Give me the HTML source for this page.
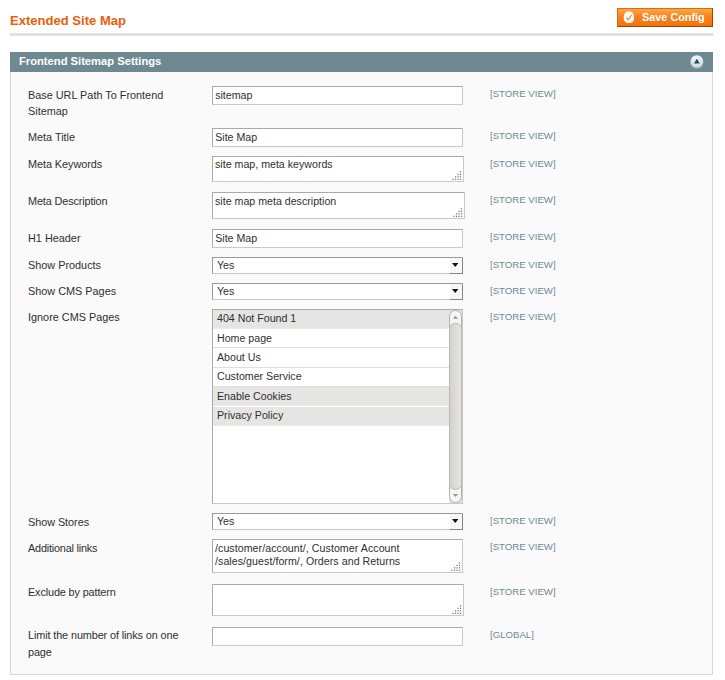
<!DOCTYPE html>
<html>
<head>
<meta charset="utf-8">
<title>Extended Site Map</title>
<style>
*{margin:0;padding:0;box-sizing:border-box;}
html,body{background:#fff;}
body{width:725px;height:680px;overflow:hidden;position:relative;font:10.875px/16px "Liberation Sans",Arial,Helvetica,sans-serif;color:#2f2f2f;}
h3{position:absolute;left:10px;top:12px;font-size:13.05px;line-height:18px;font-weight:bold;color:#e8600a;white-space:nowrap;}
.save{position:absolute;left:617px;top:8px;width:96px;height:19px;border:1px solid #ed6502;border-color:#d66d14 #a04300 #a04300 #d66d14;background:linear-gradient(#ffa940,#f6821f 45%,#f3730d);color:#fff;font-weight:bold;font-size:10.875px;line-height:17px;white-space:nowrap;}
.save span{position:absolute;left:24px;top:0;}
.save svg{position:absolute;left:5px;top:2px;}
.rule{position:absolute;left:10px;top:33px;width:703px;height:3px;background:#e0e0e0;}
.head{position:absolute;left:10px;top:52px;width:703px;height:20px;background:#6f8992;}
.head h4{position:absolute;left:9px;top:0px;font-size:11.2px;line-height:18px;color:#fff;font-weight:bold;white-space:nowrap;}
.head svg{position:absolute;left:678px;top:0;}
.fs{position:absolute;left:10px;top:72px;width:703px;height:603px;border:1px solid #d6d6d6;border-top:0;background:#fafafa;}
.lbl{position:absolute;left:28px;width:175px;}
.in{position:absolute;left:212px;width:251px;background:#fff;border:1px solid #aaa;border-color:#aaa #c8c8c8 #c8c8c8 #aaa;overflow:hidden;}
.in span{position:absolute;left:2.2px;top:0;white-space:pre;line-height:13px;font-size:10.65px;}
.in.t span{left:2px;top:2px;}
.sel span{left:4px;}
.sc{position:absolute;left:490px;font-size:9.65px;line-height:14px;margin-top:-0.3px;color:#6f8992;white-space:nowrap;}
.grip{position:absolute;right:0px;bottom:0.2px;}
.arrow{position:absolute;right:-1px;top:0;bottom:-1px;width:13.5px;background:#f7f7f7;border-right:1px solid #858585;border-bottom:1px solid #858585;}
.arrow svg{position:absolute;left:2.4px;top:5px;}
.in.sel{overflow:visible;border-color:#9a9a9a #c8c8c8 #c8c8c8 #9a9a9a;}
.ms{position:absolute;left:212px;top:309px;width:251px;height:195px;background:#fff;border:1px solid #aaa;border-color:#aaa #c8c8c8 #c8c8c8 #aaa;overflow:hidden;}
.ms .o{position:absolute;left:0;width:236px;height:19.36px;padding-left:4px;padding-top:0.7px;line-height:17px;border-bottom:1px solid #dedede;white-space:nowrap;font-size:10.65px;}
.ms .o.s{background:#e6e5e4;border-bottom-color:#eae9e8;}
.sb{position:absolute;left:236px;top:0;}
</style>
</head>
<body>
<h3>Extended Site Map</h3>
<div class="save"><svg width="12" height="13" viewBox="0 0 12 13"><rect x="0.8" y="0.6" width="10.2" height="11.4" rx="4.4" ry="4.6" fill="#fff9f2"/><path d="M3.4 6.7l1.9 2l3.3-4.7" fill="none" stroke="#ea8a3c" stroke-width="1.2"/></svg><span>Save Config</span></div>
<div class="rule"></div>
<div class="head"><h4>Frontend Sitemap Settings</h4><svg width="18" height="18" viewBox="0 0 18 18"><defs><linearGradient id="cg" x1="0" y1="0" x2="0" y2="1"><stop offset="0" stop-color="#f4f7f8"/><stop offset="1" stop-color="#c9d8dc"/></linearGradient></defs><g transform="translate(-0.15 0.55)"><ellipse cx="9" cy="10.2" rx="7" ry="6.6" fill="#8fa5ac" opacity="0.55"/><circle cx="9" cy="9" r="6.3" fill="url(#cg)"/><path d="M6.1 10.9h5.8l-2.9-4.8z" fill="#1f4b5b"/></g></svg></div>
<div class="fs"></div>

<div class="lbl" style="top:87px;letter-spacing:0px;">Base URL Path To Frontend Sitemap</div>
<div class="in" style="top:86px;height:19px"><span style="top:2px">sitemap</span></div>
<div class="sc" style="top:87px">[STORE VIEW]</div>
<div class="lbl" style="top:129px;letter-spacing:0px;">Meta Title</div>
<div class="in" style="top:128px;height:19px"><span style="top:2px">Site Map</span></div>
<div class="sc" style="top:129px">[STORE VIEW]</div>
<div class="lbl" style="top:156px;letter-spacing:-0.06px;">Meta Keywords</div>
<div class="in t" style="top:156px;height:26px;width:252px"><span style="letter-spacing:0px;top:1.2px">site map, meta keywords</span><svg class="grip" width="11.6" height="11.2" viewBox="0 0 9 9"><g fill="#777"><rect x="7" y="1" width="1" height="1"/><rect x="5" y="3" width="1" height="1"/><rect x="7" y="3" width="1" height="1"/><rect x="3" y="5" width="1" height="1"/><rect x="5" y="5" width="1" height="1"/><rect x="7" y="5" width="1" height="1"/><rect x="1" y="7" width="1" height="1"/><rect x="3" y="7" width="1" height="1"/><rect x="5" y="7" width="1" height="1"/><rect x="7" y="7" width="1" height="1"/></g></svg></div>
<div class="sc" style="top:157px">[STORE VIEW]</div>
<div class="lbl" style="top:193px;letter-spacing:-0.13px;">Meta Description</div>
<div class="in t" style="top:192px;height:27px;width:253px"><span style="letter-spacing:0px;top:2px">site map meta description</span><svg class="grip" width="11.6" height="11.2" viewBox="0 0 9 9"><g fill="#777"><rect x="7" y="1" width="1" height="1"/><rect x="5" y="3" width="1" height="1"/><rect x="7" y="3" width="1" height="1"/><rect x="3" y="5" width="1" height="1"/><rect x="5" y="5" width="1" height="1"/><rect x="7" y="5" width="1" height="1"/><rect x="1" y="7" width="1" height="1"/><rect x="3" y="7" width="1" height="1"/><rect x="5" y="7" width="1" height="1"/><rect x="7" y="7" width="1" height="1"/></g></svg></div>
<div class="sc" style="top:193px">[STORE VIEW]</div>
<div class="lbl" style="top:230px;letter-spacing:0px;">H1 Header</div>
<div class="in" style="top:229px;height:19px"><span style="top:2px">Site Map</span></div>
<div class="sc" style="top:230px">[STORE VIEW]</div>
<div class="lbl" style="top:257px;letter-spacing:0px;">Show Products</div>
<div class="in sel" style="top:257px;height:17px"><span style="top:1px">Yes</span><div class="arrow"><svg width="6.4" height="4" viewBox="0 0 6.4 4"><path d="M0 0h6.4l-3.2 4z" fill="#111"/></svg></div></div>
<div class="sc" style="top:258px">[STORE VIEW]</div>
<div class="lbl" style="top:283px;letter-spacing:0px;">Show CMS Pages</div>
<div class="in sel" style="top:283px;height:17px"><span style="top:1px">Yes</span><div class="arrow"><svg width="6.4" height="4" viewBox="0 0 6.4 4"><path d="M0 0h6.4l-3.2 4z" fill="#111"/></svg></div></div>
<div class="sc" style="top:284px">[STORE VIEW]</div>
<div class="lbl" style="top:309px;letter-spacing:0px;">Ignore CMS Pages</div>
<div class="sc" style="top:310px">[STORE VIEW]</div>
<div class="ms">
<div class="o s" style="top:-0.30px">404 Not Found 1</div>
<div class="o" style="top:19.06px">Home page</div>
<div class="o" style="top:38.42px">About Us</div>
<div class="o" style="top:57.78px">Customer Service</div>
<div class="o s" style="top:77.14px">Enable Cookies</div>
<div class="o s" style="top:96.50px">Privacy Policy</div>
<svg class="sb" width="13" height="193" viewBox="0 0 13 193"><defs><linearGradient id="tg" x1="0" y1="0" x2="1" y2="0"><stop offset="0" stop-color="#d3d1cf"/><stop offset="1" stop-color="#e9e7e5"/></linearGradient></defs><rect width="13" height="193" fill="#e0e0e0"/><rect x="0.5" y="0.5" width="12" height="192" rx="6" ry="6" fill="#f5f5f5" stroke="#b2b2b2"/><rect x="0.5" y="13.4" width="12" height="166" rx="6" ry="5" fill="url(#tg)" stroke="#b8b8b8"/><path d="M3.8 8.8h5.4l-2.7-3z" fill="#999"/><path d="M3.7 184.1h5.5l-2.75 2.8z" fill="#999"/></svg></div>
<div class="lbl" style="top:514px;letter-spacing:-0.05px;">Show Stores</div>
<div class="in sel" style="top:513px;height:17px"><span style="top:1px">Yes</span><div class="arrow"><svg width="6.4" height="4" viewBox="0 0 6.4 4"><path d="M0 0h6.4l-3.2 4z" fill="#111"/></svg></div></div>
<div class="sc" style="top:514px">[STORE VIEW]</div>
<div class="lbl" style="top:540px;letter-spacing:-0.2px;">Additional links</div>
<div class="in t" style="top:539px;height:34px;width:251px"><span style="letter-spacing:0.05px;top:2px">/customer/account/, Customer Account
/sales/guest/form/, Orders and Returns</span><svg class="grip" width="11.6" height="11.2" viewBox="0 0 9 9"><g fill="#777"><rect x="7" y="1" width="1" height="1"/><rect x="5" y="3" width="1" height="1"/><rect x="7" y="3" width="1" height="1"/><rect x="3" y="5" width="1" height="1"/><rect x="5" y="5" width="1" height="1"/><rect x="7" y="5" width="1" height="1"/><rect x="1" y="7" width="1" height="1"/><rect x="3" y="7" width="1" height="1"/><rect x="5" y="7" width="1" height="1"/><rect x="7" y="7" width="1" height="1"/></g></svg></div>
<div class="sc" style="top:540px">[STORE VIEW]</div>
<div class="lbl" style="top:584px;letter-spacing:-0.13px;">Exclude by pattern</div>
<div class="in t" style="top:584px;height:32px;width:252px"><span style="letter-spacing:0px;top:2px"></span><svg class="grip" width="11.6" height="11.2" viewBox="0 0 9 9"><g fill="#777"><rect x="7" y="1" width="1" height="1"/><rect x="5" y="3" width="1" height="1"/><rect x="7" y="3" width="1" height="1"/><rect x="3" y="5" width="1" height="1"/><rect x="5" y="5" width="1" height="1"/><rect x="7" y="5" width="1" height="1"/><rect x="1" y="7" width="1" height="1"/><rect x="3" y="7" width="1" height="1"/><rect x="5" y="7" width="1" height="1"/><rect x="7" y="7" width="1" height="1"/></g></svg></div>
<div class="sc" style="top:585px">[STORE VIEW]</div>
<div class="lbl" style="top:627px;letter-spacing:-0.11px;line-height:16.8px">Limit the number of links on one page</div>
<div class="in" style="top:627px;height:19px"><span style="top:2px"></span></div>
<div class="sc" style="top:628px">[GLOBAL]</div>
</body>
</html>
